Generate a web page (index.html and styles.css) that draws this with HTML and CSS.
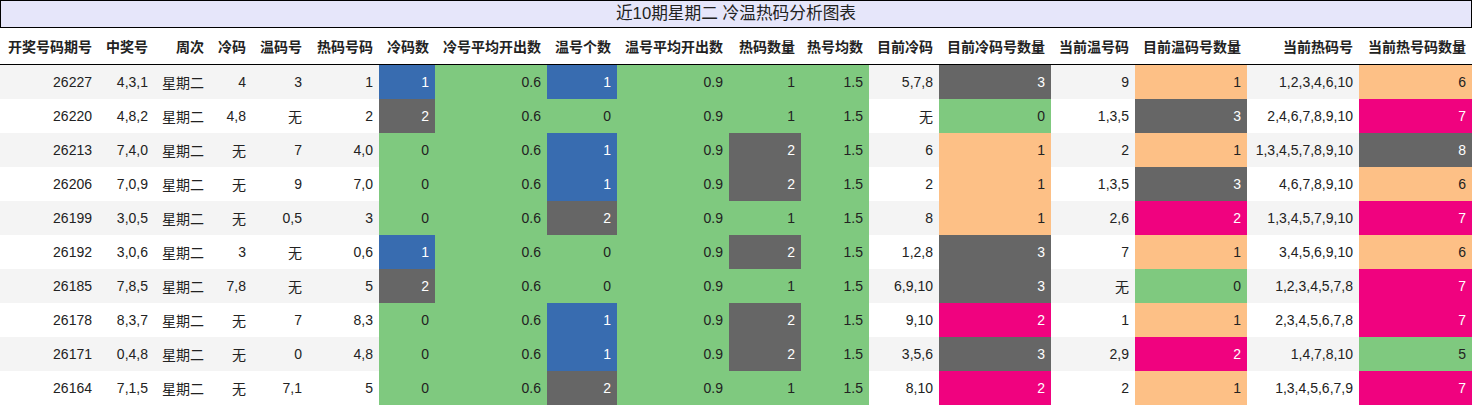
FILE: index.html
```html
<!DOCTYPE html>
<html lang="zh">
<head>
<meta charset="utf-8">
<title>冷温热码分析图表</title>
<link rel="stylesheet" href="styles.css">
</head>
<body>
<div class="title">近10期星期二 冷温热码分析图表</div>
<table class="chart">
<colgroup>
<col style="width:98px"><col style="width:56px"><col style="width:56px"><col style="width:42px"><col style="width:56px"><col style="width:71px"><col style="width:56px"><col style="width:112px"><col style="width:70px"><col style="width:112px"><col style="width:72px"><col style="width:68px"><col style="width:70px"><col style="width:112px"><col style="width:84px"><col style="width:112px"><col style="width:112px"><col style="width:113px">
</colgroup>
<thead>
<tr><th>开奖号码期号</th><th>中奖号</th><th>周次</th><th>冷码</th><th>温码号</th><th>热码号码</th><th>冷码数</th><th>冷号平均开出数</th><th>温号个数</th><th>温号平均开出数</th><th>热码数量</th><th>热号均数</th><th>目前冷码</th><th>目前冷码号数量</th><th>当前温号码</th><th>目前温码号数量</th><th>当前热码号</th><th>当前热号码数量</th></tr>
</thead>
<tbody>
<tr><td>26227</td><td>4,3,1</td><td>星期二</td><td>4</td><td>3</td><td>1</td><td class="blue">1</td><td class="green">0.6</td><td class="blue">1</td><td class="green">0.9</td><td class="green">1</td><td class="green">1.5</td><td>5,7,8</td><td class="gray">3</td><td>9</td><td class="orange">1</td><td>1,2,3,4,6,10</td><td class="orange">6</td></tr>
<tr><td>26220</td><td>4,8,2</td><td>星期二</td><td>4,8</td><td>无</td><td>2</td><td class="gray">2</td><td class="green">0.6</td><td class="green">0</td><td class="green">0.9</td><td class="green">1</td><td class="green">1.5</td><td>无</td><td class="green">0</td><td>1,3,5</td><td class="gray">3</td><td>2,4,6,7,8,9,10</td><td class="pink">7</td></tr>
<tr><td>26213</td><td>7,4,0</td><td>星期二</td><td>无</td><td>7</td><td>4,0</td><td class="green">0</td><td class="green">0.6</td><td class="blue">1</td><td class="green">0.9</td><td class="gray">2</td><td class="green">1.5</td><td>6</td><td class="orange">1</td><td>2</td><td class="orange">1</td><td>1,3,4,5,7,8,9,10</td><td class="gray">8</td></tr>
<tr><td>26206</td><td>7,0,9</td><td>星期二</td><td>无</td><td>9</td><td>7,0</td><td class="green">0</td><td class="green">0.6</td><td class="blue">1</td><td class="green">0.9</td><td class="gray">2</td><td class="green">1.5</td><td>2</td><td class="orange">1</td><td>1,3,5</td><td class="gray">3</td><td>4,6,7,8,9,10</td><td class="orange">6</td></tr>
<tr><td>26199</td><td>3,0,5</td><td>星期二</td><td>无</td><td>0,5</td><td>3</td><td class="green">0</td><td class="green">0.6</td><td class="gray">2</td><td class="green">0.9</td><td class="green">1</td><td class="green">1.5</td><td>8</td><td class="orange">1</td><td>2,6</td><td class="pink">2</td><td>1,3,4,5,7,9,10</td><td class="pink">7</td></tr>
<tr><td>26192</td><td>3,0,6</td><td>星期二</td><td>3</td><td>无</td><td>0,6</td><td class="blue">1</td><td class="green">0.6</td><td class="green">0</td><td class="green">0.9</td><td class="gray">2</td><td class="green">1.5</td><td>1,2,8</td><td class="gray">3</td><td>7</td><td class="orange">1</td><td>3,4,5,6,9,10</td><td class="orange">6</td></tr>
<tr><td>26185</td><td>7,8,5</td><td>星期二</td><td>7,8</td><td>无</td><td>5</td><td class="gray">2</td><td class="green">0.6</td><td class="green">0</td><td class="green">0.9</td><td class="green">1</td><td class="green">1.5</td><td>6,9,10</td><td class="gray">3</td><td>无</td><td class="green">0</td><td>1,2,3,4,5,7,8</td><td class="pink">7</td></tr>
<tr><td>26178</td><td>8,3,7</td><td>星期二</td><td>无</td><td>7</td><td>8,3</td><td class="green">0</td><td class="green">0.6</td><td class="blue">1</td><td class="green">0.9</td><td class="gray">2</td><td class="green">1.5</td><td>9,10</td><td class="pink">2</td><td>1</td><td class="orange">1</td><td>2,3,4,5,6,7,8</td><td class="pink">7</td></tr>
<tr><td>26171</td><td>0,4,8</td><td>星期二</td><td>无</td><td>0</td><td>4,8</td><td class="green">0</td><td class="green">0.6</td><td class="blue">1</td><td class="green">0.9</td><td class="gray">2</td><td class="green">1.5</td><td>3,5,6</td><td class="gray">3</td><td>2,9</td><td class="pink">2</td><td>1,4,7,8,10</td><td class="green">5</td></tr>
<tr><td>26164</td><td>7,1,5</td><td>星期二</td><td>无</td><td>7,1</td><td>5</td><td class="green">0</td><td class="green">0.6</td><td class="gray">2</td><td class="green">0.9</td><td class="green">1</td><td class="green">1.5</td><td>8,10</td><td class="pink">2</td><td>2</td><td class="orange">1</td><td>1,3,4,5,6,7,9</td><td class="pink">7</td></tr>
</tbody>
</table>
</body>
</html>
```
FILE: styles.css
```css
html, body {
  margin: 0;
  padding: 0;
  background: #ffffff;
}
body {
  font-family: "Liberation Sans", "Noto Sans CJK SC", sans-serif;
  color: #222222;
  width: 1472px;
}
.title {
  box-sizing: border-box;
  width: 1472px;
  height: 28px;
  border: 1px solid #000000;
  background: #e6e6fa;
  text-align: center;
  font-size: 16.7px;
  line-height: 26px;
  color: #222222;
}
.chart {
  width: 1472px;
  border-collapse: collapse;
  table-layout: fixed;
  font-size: 14px;
}
.chart th,
.chart td {
  padding: 0 6px 0 0;
  text-align: right;
  white-space: nowrap;
  overflow: hidden;
}
.chart th {
  height: 36px;
  font-weight: bold;
  border-bottom: 1px solid #000000;
  background: #ffffff;
}
.chart td {
  height: 34px;
}
.chart tbody tr:nth-child(odd) td {
  background: #f4f4f4;
}
.chart tbody tr td.blue { background: #386cb0; color: #ffffff; }
.chart tbody tr td.green { background: #7fc97f; color: #222222; }
.chart tbody tr td.gray { background: #666666; color: #ffffff; }
.chart tbody tr td.orange { background: #fdc086; color: #222222; }
.chart tbody tr td.pink { background: #f0027f; color: #ffffff; }
```
